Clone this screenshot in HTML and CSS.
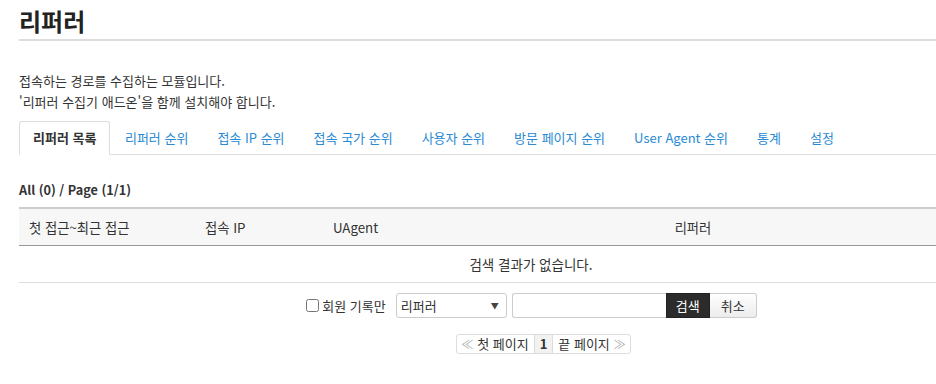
FILE: index.html
```html
<!DOCTYPE html>
<html lang="ko">
<head>
  <meta charset="UTF-8">
  <meta name="viewport" content="width=device-width, initial-scale=1.0">
  <title>리퍼러</title>
  <link rel="stylesheet" href="styles.css">
</head>
<body>

<div class="page">
  <h1 class="page-title">리퍼러</h1>

  <div class="desc">
    <p>접속하는 경로를 수집하는 모듈입니다.</p>
    <p>'리퍼러 수집기 애드온'을 함께 설치해야 합니다.</p>
  </div>

  <ul class="tabs">
    <li class="active"><a href="#">리퍼러 목록</a></li>
    <li><a href="#">리퍼러 순위</a></li>
    <li><a href="#">접속 IP 순위</a></li>
    <li><a href="#">접속 국가 순위</a></li>
    <li><a href="#">사용자 순위</a></li>
    <li><a href="#">방문 페이지 순위</a></li>
    <li><a href="#">User Agent 순위</a></li>
    <li><a href="#">통계</a></li>
    <li><a href="#">설정</a></li>
  </ul>

  <div class="summary">All (0) / Page (1/1)</div>

  <table class="list">
    <colgroup>
      <col class="col-date">
      <col class="col-ip">
      <col class="col-agent">
      <col>
    </colgroup>
    <thead>
      <tr>
        <th>첫 접근~최근 접근</th>
        <th>접속 IP</th>
        <th>UAgent</th>
        <th class="center">리퍼러</th>
      </tr>
    </thead>
    <tbody>
      <tr>
        <td colspan="4" class="empty">검색 결과가 없습니다.</td>
      </tr>
    </tbody>
  </table>

  <form class="search" onsubmit="return false">
    <label class="only-member"><input type="checkbox"> 회원 기록만</label>
    <span class="select-wrap">
      <select>
        <option>리퍼러</option>
        <option>접속 IP</option>
        <option>UAgent</option>
      </select>
    </span>
    <input type="text" class="keyword">
    <button type="submit" class="btn-dark">검색</button>
    <button type="button" class="btn-light">취소</button>
  </form>

  <div class="pager-wrap">
    <div class="pager">
      <a href="#" class="first"><span class="arrow">≪</span> 첫 페이지</a>
      <strong class="current">1</strong>
      <a href="#" class="last">끝 페이지 <span class="arrow">≫</span></a>
    </div>
  </div>
</div>

</body>
</html>
```

FILE: styles.css
```css
html, body {
  margin: 0;
}
body {
  font-family: "Noto Sans CJK KR", "Noto Sans", sans-serif;
  font-size: 13px;
  color: #333;
  background: #fff;
}
.page {
  padding-left: 19px;
}
.page-title {
  margin: 0;
  padding-top: 6px;
  height: 33px;
  line-height: 30px;
  font-size: 24px;
  font-weight: bold;
  color: #222;
  border-bottom: 2px solid #ddd;
}
.desc {
  margin-top: 29px;
  line-height: 21px;
  font-size: 13px;
}
.desc p {
  margin: 0;
}
.tabs {
  display: flex;
  margin: 9px 0 0;
  padding: 0;
  list-style: none;
  border-bottom: 1px solid #ddd;
}
.tabs li {
  margin-bottom: -1px;
}
.tabs a {
  display: block;
  padding: 0 13.5px;
  line-height: 32px;
  font-size: 13px;
  color: #2a8ad4;
  text-decoration: none;
  border: 1px solid transparent;
}
.tabs .active a {
  padding: 0 13px;
  color: #333;
  font-weight: bold;
  background: #fff;
  border-color: #ddd;
  border-bottom-color: #fff;
  border-radius: 3px 3px 0 0;
}
.summary {
  margin-top: 25px;
  margin-bottom: 7px;
  line-height: 20px;
  font-size: 12.7px;
  font-weight: bold;
}
.list {
  width: 100%;
  border-spacing: 0;
  border-top: 2px solid #ccc;
  table-layout: fixed;
}
.col-date {
  width: 176px;
}
.col-ip {
  width: 128px;
}
.col-agent {
  width: 127px;
}
.list th {
  height: 36px;
  padding: 0 10px;
  text-align: left;
  font-weight: normal;
  font-size: 13.3px;
  background: #f7f7f7;
  border-bottom: 1px solid #999;
}
.list th.center {
  text-align: center;
}
.list td {
  height: 36px;
  padding: 0 10px;
  border-bottom: 1px solid #ddd;
}
.list .empty {
  padding-left: 117px;
  text-align: center;
  font-size: 13.5px;
}
.search {
  display: flex;
  justify-content: center;
  align-items: center;
  margin-top: 10px;
  padding-left: 108px;
  height: 25px;
}
.only-member {
  display: flex;
  align-items: center;
  font-size: 13px;
}
.only-member input {
  width: 13px;
  height: 13px;
  margin: 0 3px 0 0;
}
.select-wrap {
  position: relative;
  margin-left: 10px;
}
.select-wrap select {
  appearance: none;
  -webkit-appearance: none;
  display: block;
  width: 111px;
  height: 25px;
  padding: 0 4px;
  font-family: inherit;
  font-size: 13px;
  color: #333;
  background: #fff;
  border: 1px solid #ccc;
  border-radius: 3px;
}
.select-wrap::after {
  content: "▼";
  position: absolute;
  right: 8px;
  top: 7px;
  font-size: 8px;
  color: #444;
  pointer-events: none;
}
.keyword {
  box-sizing: border-box;
  width: 154px;
  height: 25px;
  margin: 0 0 0 5px;
  border: 1px solid #ccc;
  border-right: none;
  border-radius: 3px 0 0 3px;
  font-family: inherit;
}
.search button {
  height: 25px;
  padding: 0;
  font-family: inherit;
  font-size: 13px;
  cursor: pointer;
}
.btn-dark {
  width: 44px;
  color: #fff;
  background: #2b2b2b;
  border: 1px solid #222;
}
.btn-light {
  width: 47px;
  color: #333;
  background: linear-gradient(#fff, #ececec);
  border: 1px solid #ccc;
  border-left: none;
  border-radius: 0 3px 3px 0;
}
.pager-wrap {
  display: flex;
  justify-content: center;
  margin-top: 16px;
  padding-left: 132px;
}
.pager {
  display: flex;
  height: 18px;
  line-height: 18px;
  font-size: 13px;
  border: 1px solid #ddd;
  border-radius: 3px;
}
.pager a {
  padding: 0 5px;
  color: #333;
  text-decoration: none;
}
.pager .arrow {
  color: #aaa;
  font-size: 12px;
}
.pager .current {
  padding: 0 5px;
  background: #f2f2f2;
  border-left: 1px solid #ddd;
  border-right: 1px solid #ddd;
}
```
